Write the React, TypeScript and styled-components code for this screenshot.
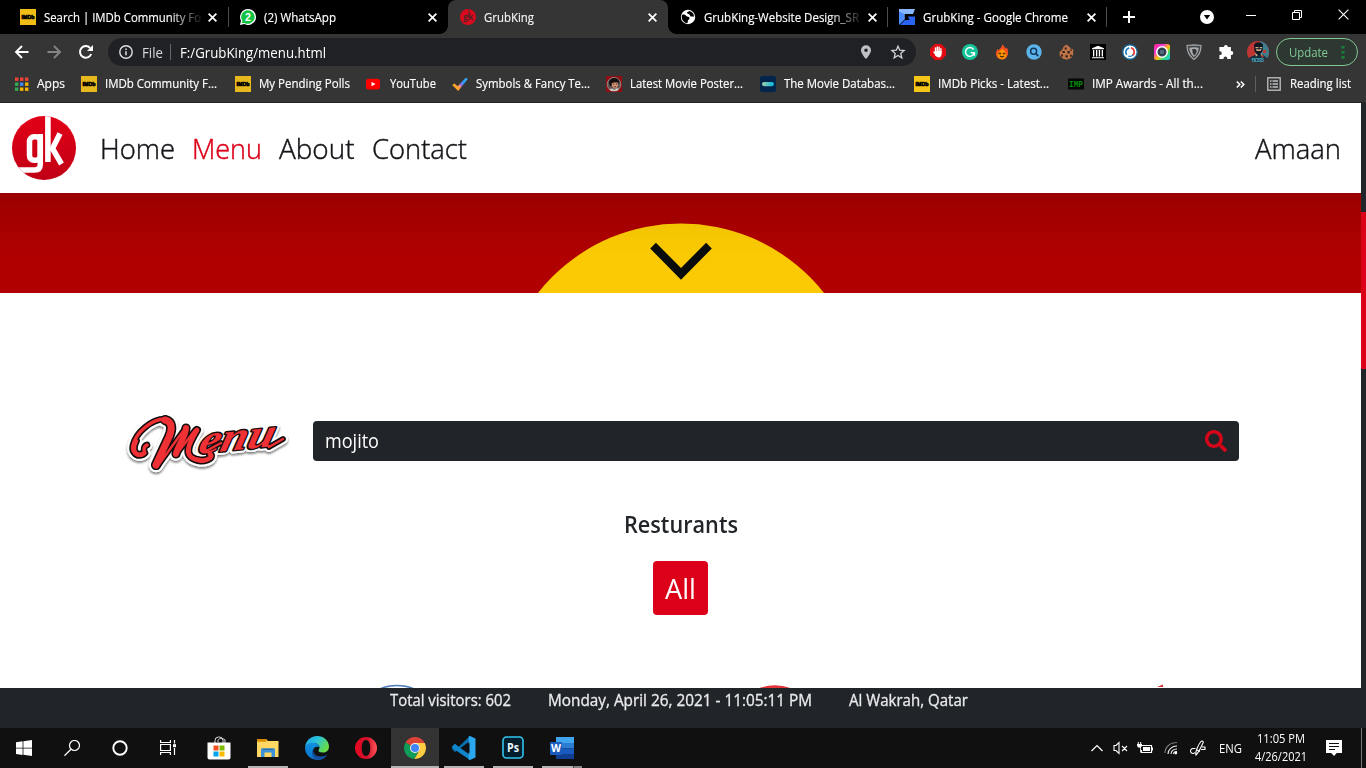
import React, { useLayoutEffect, useRef, useState } from "react";
import styled, { createGlobalStyle, css } from "styled-components";
import { FaSearch } from "react-icons/fa";

const SANS = `"Open Sans", "Noto Sans", sans-serif`;
const RED = "#dc0019";
const DARK = "#212529";

const GlobalStyle = createGlobalStyle`
  * { box-sizing: border-box; }
  body { margin: 0; overflow: hidden; background: #fff; font-family: ${SANS}; }
  svg { display: block; flex: none; }
`;

/* ---------- text that keeps a fixed advance width ---------- */

const FitBox = styled.span<{ $w: number }>`
  display: block;
  flex: none;
  width: ${(p) => p.$w}px;
  white-space: nowrap;
`;
const FitInner = styled.span`
  display: inline-block;
  transform-origin: left center;
`;

function Fit({ w, children }: { w: number; children: React.ReactNode }) {
  const ref = useRef<HTMLSpanElement>(null);
  const [scale, setScale] = useState(1);
  useLayoutEffect(() => {
    const el = ref.current;
    if (!el) return;
    el.style.transform = "none";
    const natural = el.getBoundingClientRect().width;
    el.style.transform = `scaleX(${w / natural})`;
    setScale(w / natural);
  }, [w]);
  return (
    <FitBox $w={w}>
      <FitInner ref={ref} style={{ transform: `scaleX(${scale})` }}>{children}</FitInner>
    </FitBox>
  );
}

/* ---------- layout ---------- */

const Screen = styled.div`
  width: 1366px;
  height: 768px;
  display: flex;
  flex-direction: column;
  overflow: hidden;
`;
const TabStrip = styled.div`
  height: 34px;
  flex: none;
  display: flex;
  background: #000;
  padding-left: 8px;
`;
const Tab = styled.div<{ $w?: number; $active?: boolean; $divider?: boolean }>`
  position: relative;
  width: ${(p) => p.$w ?? 220}px;
  flex: none;
  height: 34px;
  display: flex;
  align-items: center;
  padding-left: 12px;
  gap: 8px;
  color: #fff;
  font-size: 12.1px;
  line-height: 35px;
  -webkit-text-stroke: 0.15px currentColor;
  ${(p) => p.$active && css`
    background: #353535;
    border-radius: 8px 8px 0 0;
    color: #f1f3f4;
    &::before, &::after {
      content: "";
      position: absolute;
      bottom: 0;
      width: 8px;
      height: 8px;
    }
    &::before { left: -8px; background: radial-gradient(circle at 0 0, #000 7.5px, #353535 8px); }
    &::after { right: -8px; background: radial-gradient(circle at 100% 0, #000 7.5px, #353535 8px); }
  `}
  ${(p) => p.$divider && css`
    &::after {
      content: "";
      position: absolute;
      right: -1px;
      top: 7px;
      width: 1px;
      height: 20px;
      background: #4c4c4c;
    }
  `}
`;
const TabTitle = styled.div<{ $fade?: boolean }>`
  width: 157px;
  flex: none;
  ${(p) => p.$fade && css`mask-image: linear-gradient(90deg, #000 125px, transparent 160px);`}
`;
const TabClose = styled.span`
  display: block;
  margin-left: -1px;
`;
const WindowTools = styled.div`
  flex: 1;
  display: flex;
  gap: 34px;
  height: 34px;
`;
const ToolRow = styled.div`
  height: 36px;
  flex: none;
  display: flex;
  align-items: center;
  background: #353535;
`;
const Cell = styled.div<{ $w: number; $h?: number }>`
  width: ${(p) => p.$w}px;
  height: ${(p) => (p.$h ? p.$h + "px" : "auto")};
  flex: none;
  display: flex;
  align-items: center;
  justify-content: center;
`;
const UrlBar = styled.div`
  width: 808px;
  height: 28px;
  border-radius: 14px;
  background: #202124;
  display: flex;
  align-items: center;
  padding-left: 10px;
  font-size: 13.8px;
  line-height: 29px;
  color: #fff;
`;
const FileLabel = styled.div`
  margin-left: 8px;
  color: #d5d7da;
`;
const UrlDivider = styled.div`
  width: 1px;
  height: 16px;
  background: #66686b;
  margin: 0 9px 0 7px;
`;
const UrlIcons = styled.div`
  margin-left: auto;
  display: flex;
  padding-right: 2px;
`;
const UpdatePill = styled.div`
  width: 82px;
  height: 28px;
  border: 1px solid #81c995;
  border-radius: 14px;
  margin-left: 2px;
  background: #2e3832;
  display: flex;
  align-items: center;
  padding-left: 12px;
  color: #81c995;
  font-size: 12.8px;
  line-height: 26px;
  gap: 13px;
`;
const BookmarkRow = styled.div`
  height: 33px;
  flex: none;
  display: flex;
  align-items: center;
  background: #353535;
  border-bottom: 1px solid #242424;
  padding: 0 0 4px 13px;
  color: #fff;
  font-size: 12.1px;
  line-height: 28px;
  -webkit-text-stroke: 0.15px currentColor;
`;
const Bookmark = styled.div<{ $w: number }>`
  width: ${(p) => p.$w}px;
  flex: none;
  display: flex;
  align-items: center;
  gap: 8px;
`;
const ReadingList = styled.div`
  display: flex;
  align-items: center;
  height: 16px;
  border-left: 1px solid #5f5f5f;
  margin-left: 9px;
  padding-left: 11px;
  gap: 9px;
`;
const Viewport = styled.div`
  height: 585px;
  flex: none;
  display: flex;
  background: #fff;
`;
const PageBody = styled.main`
  width: 1361px;
  overflow: hidden;
`;
const ScrollTrack = styled.div`
  width: 5px;
  background: ${DARK};
  padding-top: 109px;
`;
const ScrollThumb = styled.div`
  height: 157px;
  background: ${RED};
`;
const SiteHeader = styled.header`
  height: 90px;
  display: flex;
  align-items: center;
  padding: 0 20px 0 12px;
  color: #141619;
  font-size: 28px;
  line-height: 40px;
  font-weight: 300;
  -webkit-text-stroke: 0.45px currentColor;
`;
const Nav = styled.nav`
  display: flex;
  gap: 17px;
  margin: 0 auto 0 24px;
`;
const NavLink = styled.a<{ $active?: boolean }>`
  color: ${(p) => (p.$active ? RED : "#141619")};
`;
const UserName = styled.div``;
const Banner = styled.section`
  height: 100px;
  display: flex;
  justify-content: center;
  background: linear-gradient(#9b0000, #a90000 40%, #b00000 65%, #b10000);
`;
const SearchRow = styled.section`
  margin-top: 118px;
  display: flex;
  align-items: flex-start;
  padding-left: 120px;
`;
const SearchBox = styled.div`
  margin: 10px 0 0 21px;
  width: 926px;
  height: 40px;
  border-radius: 4px;
  background: ${DARK};
  color: #fff;
  display: flex;
  align-items: center;
  justify-content: space-between;
  padding: 0 12px;
  font-size: 19.2px;
  line-height: 40px;
`;
const Restaurants = styled.section`
  display: flex;
  flex-direction: column;
  align-items: center;
  margin-top: 27px;
`;
const Heading = styled.h2`
  margin: 0;
  font-size: 22.8px;
  line-height: 33px;
  font-weight: 600;
  color: ${DARK};
`;
const AllButton = styled.button`
  width: 55px;
  height: 54px;
  margin: 20px 0 0;
  padding: 0 0 0 12px;
  border: 0;
  border-radius: 4px;
  background: ${RED};
  color: #fff;
  font: 400 27px/55px ${SANS};
  text-align: left;
`;
const LogoPeeks = styled.div`
  height: 5px;
  margin-top: 68px;
  display: flex;
`;
const Footer = styled.footer`
  height: 40px;
  flex: none;
  background: ${DARK};
  color: #e9eaeb;
  display: flex;
  gap: 37px;
  padding: 0 0 0 390px;
  font-size: 15.4px;
  line-height: 26px;
  -webkit-text-stroke: 0.3px currentColor;
`;
const Taskbar = styled.div`
  height: 40px;
  flex: none;
  background: #101010;
  display: flex;
  color: #fff;
`;
const SystemButtons = styled.div`
  display: flex;
  margin-right: 2px;
`;
const AppButton = styled.div<{ $open?: boolean; $active?: boolean; $more?: boolean }>`
  position: relative;
  width: 49px;
  height: 40px;
  display: flex;
  align-items: center;
  justify-content: center;
  ${(p) => p.$active && css`background: linear-gradient(90deg, #101010 1px, #333 1px);`}
  ${(p) => (p.$open || p.$active) && css`
    &::after {
      content: "";
      position: absolute;
      bottom: 0;
      left: ${p.$active ? 1 : 5}px;
      right: ${p.$active ? 0 : 4}px;
      height: 2px;
      background: ${p.$more ? "linear-gradient(90deg,#b4b4b4 31px,#4a4a4a 31px 32px,#858585 32px)" : "#b4b4b4"};
    }
  `}
`;
const Tray = styled.div`
  margin-left: auto;
  display: flex;
  align-items: center;
  font-size: 11.8px;
  line-height: 18px;
`;
const Clock = styled.div`
  margin-left: 13px;
  width: 52px;
  display: flex;
  flex-direction: column;
  align-items: center;
  padding-bottom: 2px;
`;
const DesktopEdge = styled.div`
  width: 5px;
  height: 40px;
  border-left: 1px solid #777;
`;

/* ---------- icons ---------- */

const Svg = ({ s = 16, h, vb, children }: { s?: number; h?: number; vb?: string; children: React.ReactNode }) => (
  <svg width={s} height={h ?? s} viewBox={vb ?? `0 0 ${s} ${h ?? s}`} fill="none">{children}</svg>
);

const Imdb = ({ c = "#e6b91e" }: { c?: string }) => (
  <Svg>
    <rect width="16" height="16" fill={c} />
    <text x="1.6" y="10.2" fontFamily="Liberation Sans" fontWeight="700" fontSize="6" textLength="13" lengthAdjust="spacingAndGlyphs" fill="#000" stroke="#000" strokeWidth=".7">IMDb</text>
  </Svg>
);
const WhatsApp = () => (
  <Svg>
    <path d="M8 0a8 8 0 1 1-3.7 15.1L0 16l1-4.2A8 8 0 0 1 8 0Z" fill="#fff" />
    <path d="M8 1.2A6.8 6.8 0 1 1 4.5 13.900L1.8 14.300l.6-2.500A6.8 6.8 0 0 1 8 1.200Z" fill="#12c343" />
    <text x="5" y="11.700" fontFamily="Liberation Sans" fontWeight="700" fontSize="10.500" fill="#fff">2</text>
  </Svg>
);
const GkFavicon = () => (
  <Svg>
    <circle cx="8" cy="8" r="8" fill="#d80a1e" />
    <path d="M8.400 0h1v9h-1z" fill="#5c2328" />
    <text x="3.200" y="11" fontFamily="Open Sans" fontWeight="700" fontSize="9.500" textLength="10" lengthAdjust="spacingAndGlyphs" fill="#4d2226">gk</text>
  </Svg>
);
const Globe = () => (
  <Svg>
    <circle cx="8" cy="8" r="7.200" fill="#fff" />
    <path d="M2.500 5.500c1.800 0 3 .4 3.800 1.600 1 .9 2.500.6 3.200 1.700.5 1.200-.9 1.700-1.500 2.700-.4.900.1 1.800-.8 2.700C4 13.600 1.700 11 1.700 8c0-1 .3-1.900.8-2.500ZM9.300 1.900c-.6 1-2.300.7-2.300 1.900 0 1.100 1.700.9 2.500 1.700.7.800.4 1.800 1.400 2 .9.300 2-.4 3.200.2C14 4.700 12 2.300 9.300 1.900Z" fill="#000" />
  </Svg>
);
const Gmetrix = () => (
  <Svg>
    <path d="M0 0h16l-2 5H5.500v5L0 15Z" fill="#8ab8ff" />
    <path d="M0 3v13l5.500-5.500V5L1 3Z" fill="#4b8cff" />
    <path d="M9 7.500h7V16H1l5-5h4.500Z" fill="#2a62f2" />
  </Svg>
);
const X = ({ s = 8, w = 1.6 }: { s?: number; w?: number }) => (
  <Svg s={s}><path d={`M.6.6 ${s - 0.6} ${s - 0.6}M${s - 0.6}.6.6 ${s - 0.6}`} stroke="#fff" strokeWidth={w} /></Svg>
);
const Arrow = ({ c, flip }: { c: string; flip?: boolean }) => (
  <Svg><path d={flip ? "M1.500 8h12M8 2l6 6-6 6" : "M14.500 8h-12M8 2 2 8l6 6"} stroke={c} strokeWidth="1.900" /></Svg>
);
const Reload = () => (
  <Svg><path d="M13.200 10a5.800 5.800 0 1 1-1-5.900" stroke="#fff" strokeWidth="2" /><path d="M15 1v6H9Z" fill="#fff" /></Svg>
);
const Info = () => (
  <Svg><circle cx="8" cy="8" r="6.200" stroke="#dfe1e5" strokeWidth="1.400" /><path d="M8 7.200v4M8 4.600v1.500" stroke="#dfe1e5" strokeWidth="1.500" /></Svg>
);
const Pin = () => (
  <Svg><path fillRule="evenodd" d="M8 1.200a5 5 0 0 0-5 5c0 3.500 5 8.800 5 8.800s5-5.300 5-8.800a5 5 0 0 0-5-5Zm0 3.200a1.800 1.800 0 1 1 0 3.600 1.800 1.800 0 0 1 0-3.600Z" fill="#bdc1c6" /></Svg>
);
const Star = () => (
  <Svg><path d="m8 2.200 1.700 4 4.400.4-3.300 2.900 1 4.300L8 11.500l-3.800 2.300 1-4.300-3.300-2.900 4.400-.4Z" stroke="#d0d2d6" strokeWidth="1.300" /></Svg>
);

const AdBlock = () => (
  <Svg>
    <path d="M4.700 0h6.600L16 4.700v6.600L11.300 16H4.700L0 11.300V4.700Z" fill="#e30b12" />
    <path d="M5.500 9V4M7.300 8V2.900M9.100 8V3.300M10.900 9.500V4.800M3.900 8l2.300 3" stroke="#fff" strokeWidth="1.400" strokeLinecap="round" />
    <path d="M4.900 7h6.600v3.200c0 2-1 3.200-2.900 3.200-1.900 0-3.700-1.500-3.700-3.600Z" fill="#fff" />
  </Svg>
);
const Grammarly = () => (
  <Svg>
    <circle cx="8" cy="8" r="8" fill="#15c39a" />
    <path d="M11.600 5.500A4.400 4.400 0 1 0 12.200 9M8.800 8.800h3.600v3" stroke="#fff" strokeWidth="1.400" />
  </Svg>
);
const Flame = () => (
  <Svg>
    <path d="M8.300.5c2 1.500 2.200 3 3.600 4.300l1-1.200c1 2.200 1.600 4 1.100 6.400-.5 2.900-2.700 5.500-6 5.500s-5.700-2.300-6-5.200C1.700 8.200 2.500 6.500 3.600 5l1 1.200C5.800 4.500 8.200 3 8.300.5Z" fill="#f4511e" />
    <path d="M8 5c2 1.500 4.500 2.500 4.500 6 0 2.500-2 4.200-4.500 4.200S3.500 13.500 3.500 11C3.500 8 6.500 7 8 5Z" fill="#ff9800" />
    <path d="M4.500 9.500h2.700M8.800 9.500h2.700M6 12.200c1.300.8 2.700.8 4 0" stroke="#5a2b12" strokeWidth="1.400" />
  </Svg>
);
const BlueLens = () => (
  <Svg>
    <circle cx="8" cy="8" r="7.700" fill="#5bb5ea" />
    <circle cx="7.600" cy="7.300" r="3" stroke="#16365c" strokeWidth="1.500" />
    <path d="m9.800 9.600 2.500 2.600" stroke="#16365c" strokeWidth="1.700" />
  </Svg>
);
const Cookie = () => (
  <Svg>
    <path d="M9.500.6c.1 1.700 1 2.400 2.400 2.500.2 1.700 1.300 2.200 3.300 2.200v4.900l-2 3.800-4.500 1.700-4-1.200-3-3.100L1.500 8 4 6l2-4Z" fill="#bd7448" />
    <path d="M6.700 3.500h2v2h-2zM9.500 7h2.300v2.400H9.500zM4.500 7h2.300v2H4.500zM3 10.500h2v2H3zM7.500 11.200h2.300v2.400H7.500zM12 10.800h1.800v2H12zM12.200 5.600h1.700v1.200h-1.700z" fill="#3d2018" />
  </Svg>
);
const Archive = () => (
  <Svg>
    <rect width="16" height="16" fill="#000" />
    <path d="m2 4.200 6-2.500 6 2.500v1H2ZM3 6h1.300v6.500H3zM6 6h1.300v6.500H6zM8.800 6h1.300v6.500H8.800zM11.700 6H13v6.500h-1.300zM2 13.200h12v1H2z" fill="#fff" />
  </Svg>
);
const Swirl = () => (
  <Svg>
    <circle cx="8" cy="8" r="7.300" fill="#fff" stroke="#17628f" strokeWidth="1.400" />
    <path d="M7.200 3.800a4.300 4.300 0 0 0-2.400 7" stroke="#1d81bd" strokeWidth="1.700" />
    <path d="M6.300 12.100a4.300 4.300 0 0 0 5.800-3.600" stroke="#1d81bd" strokeWidth="1.300" />
    <path d="M9 3.800a4.300 4.300 0 0 1 1.800 7.400" stroke="#e53935" strokeWidth="1.700" />
  </Svg>
);
const Camera = () => (
  <Svg>
    <defs><linearGradient id="cam" x1="0" y1="0" x2="1" y2="1"><stop stopColor="#ff2f80" /><stop offset=".3" stopColor="#f533d7" /><stop offset=".55" stopColor="#ffc400" /><stop offset=".75" stopColor="#2bdb77" /><stop offset="1" stopColor="#1dc8ff" /></linearGradient></defs>
    <rect width="16" height="16" rx="2.500" fill="url(#cam)" />
    <circle cx="8" cy="8" r="5.300" fill="#3b4a5c" stroke="#fff" strokeWidth="1.500" />
    <circle cx="8" cy="8" r="3" fill="#53687d" stroke="#202c3b" />
  </Svg>
);
const Shield = () => (
  <Svg>
    <path d="M8 .8 15 1.500c0 6-1.800 10.500-7 14C2.800 12 1 7.500 1 1.500Z" fill="#44474a" stroke="#a6a8aa" strokeWidth="1.200" />
    <path d="M8 3.300c1.800 0 3.200.2 4.700.5-.2 3.800-1.500 6.700-4.700 9.200-3.200-2.500-4.500-5.400-4.700-9.200C4.800 3.500 6.200 3.300 8 3.300Z" fill="#a9abad" />
    <path d="M6.300 5H8c2.300 0 3 1 2.500 2.900C10.100 9.400 9.200 10.500 8 11.300 6.800 9.800 6.300 8 6.300 5Z" fill="#333" />
  </Svg>
);
const Puzzle = () => (
  <Svg><path d="M6 3a1.900 1.900 0 0 1 3.800 0h3.100v3.900h.4a2 2 0 0 1 0 4h-.4V15H9.300v-.6a1.900 1.900 0 0 0-3.800 0v.6H1.400v-3.900h.5a1.900 1.900 0 0 0 0-3.800h-.5V3Z" fill="#fff" /></Svg>
);
const Avatar = () => (
  <Svg s={22}>
    <defs><clipPath id="av"><circle cx="11" cy="11" r="11" /></clipPath></defs>
    <g clipPath="url(#av)">
      <path fill="#bf3634" d="M0 0h22v22H0z" />
      <path fill="#3f7f8d" d="M13 0h9v17h-9z" />
      <path fill="#17303e" d="m2 17 5-3 8-1 5 4v5H2Z" />
      <path fill="#0d1820" d="M7 4c2-4 8-3 9 0l-.5 6-3 4H10L7.500 10Z" />
      <path fill="#cfa78e" d="M8.500 6h3v1.200h-3zM12.700 6h2.400v1.200h-2.400zM9 8l2.500.4 3-.4-.8 2H9.500ZM8 12l3 2-2 1.500ZM14 12l2 3h-2z" />
      <path fill="#c33b35" d="M16 9h3v3h-3zM14 14l3 1-2 2zM5 14l2-2v3z" />
      <text x="4.400" y="21.300" fontFamily="Liberation Sans" fontWeight="700" fontSize="5.500" fill="#4faabd" textLength="13">BOSS</text>
    </g>
  </Svg>
);
const AppsGrid = () => (
  <Svg>
    {["#ef4437", "#ef4437", "#ef4437", "#34a853", "#4285f4", "#f4b400", "#34a853", "#f4b400", "#f4b400"].map((c, i) => (
      <rect key={i} x={2 + (i % 3) * 5} y={1.500 + Math.floor(i / 3) * 5} width="3.400" height="3.400" fill={c} />
    ))}
  </Svg>
);
const YouTube = () => (
  <Svg><rect x="0" y="2.700" width="14" height="10.800" rx="2.500" fill="#f00" /><path d="m5.500 6 4 2.100-4 2.200Z" fill="#fff" /></Svg>
);
const Check = () => (
  <Svg>
    <defs><linearGradient id="ck" x1="2" y1="13" x2="15" y2="3" gradientUnits="userSpaceOnUse"><stop stopColor="#ffb300" /><stop offset=".35" stopColor="#ff9656" /><stop offset=".5" stopColor="#9169f2" /><stop offset=".7" stopColor="#2c9cff" /><stop offset="1" stopColor="#35aef8" /></linearGradient></defs>
    <path d="m.2 8.900 2.200-1.300 3.200 2.700 8.300-8.600 1.900 1.200L6.200 15Z" fill="url(#ck)" />
  </Svg>
);
const Poster = () => (
  <Svg>
    <rect width="16" height="16" fill="#920e15" />
    <circle cx="8" cy="8.300" r="6.800" fill="#5e5451" stroke="#999591" strokeWidth=".8" />
    <path d="M3 7c0-5 8-7 10-2l.5 3-2-2-5 1-1 3H4Z" fill="#160f10" />
    <path d="m5.500 7.500 2-1 4 .3.500 2.700-2 3H8L6 10Z" fill="#d89575" />
    <path d="M6.800 8h1.500M9.800 8h1.500M8 10.800h2" stroke="#321719" strokeWidth=".8" />
    <path d="m3 13 4-.500 1 1.500 3-2 2 1-2 2H5Z" fill="#c8c8c2" />
  </Svg>
);
const Tmdb = () => (
  <Svg>
    <defs><linearGradient id="tm"><stop stopColor="#a1cfaa" /><stop offset="1" stopColor="#02b8dc" /></linearGradient></defs>
    <rect width="16" height="16" rx="2.500" fill="#03254b" />
    <rect x="2" y="6" width="12" height="4.200" rx="2.100" fill="url(#tm)" />
  </Svg>
);
const Imp = () => (
  <Svg>
    <rect y="2.500" width="16" height="11" rx="1" fill="#030803" />
    <text x="1" y="11.300" fontFamily="Liberation Mono" fontWeight="700" fontSize="8.500" textLength="14" lengthAdjust="spacingAndGlyphs" fill="#078a0d">IMP</text>
  </Svg>
);
const ListIcon = () => (
  <Svg s={14}>
    <rect x=".8" y=".8" width="12.400" height="12.400" stroke="#bfc1c4" strokeWidth="1.300" />
    <path d="M3 4h1.500M3 7h1.500M3 10h1.500M5.500 4H11M5.500 7H11M5.500 10H11" stroke="#bfc1c4" strokeWidth="1.300" />
  </Svg>
);

const GkLogo = () => (
  <Svg s={64}>
    <defs>
      <linearGradient id="gk" x1="0" y1="0" x2="0" y2="1"><stop stopColor="#e20017" /><stop offset="1" stopColor="#c00015" /></linearGradient>
      <clipPath id="disc"><circle cx="32" cy="32" r="32" /></clipPath>
    </defs>
    <circle cx="32" cy="32" r="32" fill="url(#gk)" />
    <g clipPath="url(#disc)" stroke="#fff">
      <path d="M35.900 0v46" strokeWidth="5.600" />
      <path d="M48 17.500 40.500 32.500 49.500 48" strokeWidth="5.500" strokeLinejoin="bevel" />
      <path d="M28.300 18v30q0 6-5.500 6H3" strokeWidth="5.500" />
      <rect x="17.500" y="20.800" width="10.800" height="23.500" rx="4.500" strokeWidth="5.500" />
    </g>
  </Svg>
);

const MenuLogo = () => (
  <svg width="172" height="70" viewBox="0 0 172 70" fill="none">
    <defs><filter id="ms" x="-10%" y="-10%" width="120%" height="130%"><feDropShadow dx="0" dy="2" stdDeviation="1.100" floodColor="#000" floodOpacity=".5" /></filter></defs>
    {[["#fff", 7.500], ["#140c0d", 3.200], ["#ef3034", 0]].map(([c, o], i) => {
      const g = o as number;
      return (
        <g key={i} filter={i === 0 ? "url(#ms)" : undefined} stroke={c as string} strokeLinejoin="round" strokeLinecap="round">
          <path d="M27 34c-3 1-4 5-2 8-7 5-14 0-12-8C16 22 31 8 45 8" strokeWidth={g + 3.500} />
          <path d="M23 43c-9 3-11-5-7-13" strokeWidth={g + 4.500} />
          <path d="M45 9c8 2 7 10 4 17L36 54" strokeWidth={g + 7} />
          <path d="M37 56 66 16" strokeWidth={g + 2.500} />
          <path d="M66 17C66 26 58 33 56 43" strokeWidth={g + 6} />
          <path d="M56 44 75 19" strokeWidth={g + 2.500} />
          <path d="M77 19C72 28 64 40 71 46c5 4 14 5 19 1q2-2 0-4" strokeWidth={g + 4.800} />
          <text
            transform="translate(77 43) rotate(-6) skewX(-20)"
            fontFamily="Liberation Serif" fontStyle="italic" fontWeight="700" fontSize="40"
            textLength="76" lengthAdjust="spacingAndGlyphs"
            fill={c as string} strokeWidth={g * 0.85}
          >enu</text>
          <path d="M88 39 101 32M149 36 163 28" strokeWidth={g + 2.500} />
        </g>
      );
    })}
  </svg>
);

const bookmarks: { icon: React.ReactNode; label: string; w: number; tw: number }[] = [
  { icon: <AppsGrid />, label: "Apps", w: 68, tw: 28 },
  { icon: <Imdb />, label: "IMDb Community F...", w: 154, tw: 112 },
  { icon: <Imdb />, label: "My Pending Polls", w: 131, tw: 91 },
  { icon: <YouTube />, label: "YouTube", w: 86, tw: 46 },
  { icon: <Check />, label: "Symbols & Fancy Te...", w: 154, tw: 114 },
  { icon: <Poster />, label: "Latest Movie Poster...", w: 154, tw: 113 },
  { icon: <Tmdb />, label: "The Movie Databas...", w: 154, tw: 111 },
  { icon: <Imdb c="#f5c518" />, label: "IMDb Picks - Latest...", w: 154, tw: 111 },
  { icon: <Imp />, label: "IMP Awards - All th...", w: 167, tw: 111 },
];

const tabs = [
  { icon: <Imdb c="#f0bd17" />, title: "Search | IMDb Community Fo", tw: 157, fade: true, divider: true },
  { icon: <WhatsApp />, title: "(2) WhatsApp", tw: 72 },
  { icon: <GkFavicon />, title: "GrubKing", tw: 50, active: true },
  { icon: <Globe />, title: "GrubKing-Website Design_SR", tw: 155, fade: true, divider: true, w: 219 },
  { icon: <Gmetrix />, title: "GrubKing - Google Chrome", tw: 145, divider: true, w: 219 },
];

export default function App() {
  return (
    <Screen>
      <GlobalStyle />
      <TabStrip>
        {tabs.map((t) => (
          <Tab key={t.title} $w={t.w} $active={t.active} $divider={t.divider}>
            {t.icon}
            <TabTitle $fade={t.fade}><Fit w={t.tw}>{t.title}</Fit></TabTitle>
            <TabClose><X s={9} w={1.7} /></TabClose>
          </Tab>
        ))}
        <WindowTools>
          <Cell $w={46} $h={34}><Svg s={12}><path d="M6 0v12M0 6h12" stroke="#fff" strokeWidth="2" /></Svg></Cell>
          <Cell $w={42} $h={34}><Svg s={14}><circle cx="7" cy="7" r="7" fill="#fff" /><path d="M3.800 5h6.400L7 9.500Z" fill="#000" /></Svg></Cell>
        </WindowTools>
        <Cell $w={46} $h={29}><Svg s={10}><path d="M0 5.500h10" stroke="#fff" /></Svg></Cell>
        <Cell $w={46} $h={29}><Svg s={10}><path d="M.5 2.500h7v7h-7ZM2.500 2.500v-2h7v7h-2" stroke="#fff" /></Svg></Cell>
        <Cell $w={46} $h={29}><X s={11} w={1.1} /></Cell>
      </TabStrip>
      <ToolRow>
        <Cell $w={44}><Arrow c="#fff" /></Cell>
        <Cell $w={20}><Arrow c="#858585" flip /></Cell>
        <Cell $w={44}><Reload /></Cell>
        <UrlBar>
          <Info />
          <FileLabel><Fit w={21}>File</Fit></FileLabel>
          <UrlDivider />
          <Fit w={146}>F:/GrubKing/menu.html</Fit>
          <UrlIcons>
            <Cell $w={32}><Pin /></Cell>
            <Cell $w={32}><Star /></Cell>
          </UrlIcons>
        </UrlBar>
        <Cell $w={6} />
        {[AdBlock, Grammarly, Flame, BlueLens, Cookie, Archive, Swirl, Camera, Shield, Puzzle].map((I, i) => (
          <Cell key={i} $w={32}><I /></Cell>
        ))}
        <Cell $w={32}><Avatar /></Cell>
        <UpdatePill>
          <Fit w={39}>Update</Fit>
          <Svg s={4} h={14}><path d="M.5 1h3v2.500h-3zM.5 6h3v2.500h-3zM.5 11h3v2.500h-3z" fill="#188038" /></Svg>
        </UpdatePill>
      </ToolRow>
      <BookmarkRow>
        {bookmarks.map((b) => (
          <Bookmark key={b.label} $w={b.w}>{b.icon}<Fit w={b.tw}>{b.label}</Fit></Bookmark>
        ))}
        <Cell $w={11}>
          <Svg s={9}><path d="m.8 1.500 3 3-3 3M4.800 1.500l3 3-3 3" stroke="#fff" strokeWidth="1.500" /></Svg>
        </Cell>
        <ReadingList><ListIcon /><Fit w={61}>Reading list</Fit></ReadingList>
      </BookmarkRow>

      <Viewport>
        <PageBody>
          <SiteHeader>
            <GkLogo />
            <Nav>
              <NavLink><Fit w={75}>Home</Fit></NavLink>
              <NavLink $active><Fit w={70}>Menu</Fit></NavLink>
              <NavLink><Fit w={75.5}>About</Fit></NavLink>
              <NavLink><Fit w={95}>Contact</Fit></NavLink>
            </Nav>
            <UserName><Fit w={86}>Amaan</Fit></UserName>
          </SiteHeader>
          <Banner>
            <svg width="366" height="100" viewBox="0 0 366 100">
              <defs>
                <linearGradient id="sun" x1="0" y1="30" x2="0" y2="64" gradientUnits="userSpaceOnUse"><stop stopColor="#f2c400" /><stop offset="1" stopColor="#fbca05" /></linearGradient>
              </defs>
              <circle cx="183" cy="212.500" r="182" fill="url(#sun)" />
              <path d="m152.200 55.500 5.700-5.700L183 75l25.100-25.200 5.700 5.700L183 86.700Z" fill="#0a0b0b" />
            </svg>
          </Banner>
          <SearchRow>
            <MenuLogo />
            <SearchBox>
              <Fit w={54}>mojito</Fit>
              <FaSearch size={22} color="#d60619" />
            </SearchBox>
          </SearchRow>
          <Restaurants>
            <Heading><Fit w={114}>Resturants</Fit></Heading>
            <AllButton><Fit w={31}>All</Fit></AllButton>
          </Restaurants>
          <LogoPeeks>
            <svg width="1361" height="5" viewBox="0 0 1361 5" fill="none">
              <circle cx="397" cy="45.500" r="43" stroke="#4d7db5" strokeWidth="1.500" />
              <circle cx="775" cy="48" r="45.700" fill="#e5333a" />
              <path d="M1157 4q3-1.500 6-2.500V4Z" fill="#d92b32" />
            </svg>
          </LogoPeeks>
        </PageBody>
        <ScrollTrack><ScrollThumb /></ScrollTrack>
      </Viewport>

      <Footer>
        <Fit w={121}>Total visitors: 602</Fit>
        <Fit w={264}>Monday, April 26, 2021 - 11:05:11 PM</Fit>
        <Fit w={119}>Al Wakrah, Qatar</Fit>
      </Footer>

      <Taskbar>
        <SystemButtons>
          <Cell $w={48}><Svg><path d="m0 2.200 6.600-.9v6.400H0ZM7.400 1.200 16 0v7.700H7.400ZM0 8.500h6.600V15L0 14ZM7.400 8.500H16V16l-8.600-1.200Z" fill="#fff" /></Svg></Cell>
          <Cell $w={48}><Svg><circle cx="10.500" cy="5.500" r="5" stroke="#fff" strokeWidth="1.200" /><path d="M7 9.200.4 15.700" stroke="#fff" strokeWidth="1.300" /></Svg></Cell>
          <Cell $w={48}><Svg><circle cx="8" cy="8" r="6.700" stroke="#fff" strokeWidth="1.900" /></Svg></Cell>
          <Cell $w={48}><Svg><path d="M.6 0v2.500h9.800V0M.6 15v-2.500h9.800V15M.6 4.500h9.800v6H.6ZM14.500 0v3.500M14.500 8v7" stroke="#fff" strokeWidth="1.200" /><path d="M13 4.200h3v3h-3z" fill="#fff" /></Svg></Cell>
        </SystemButtons>
        <AppButton>
          <Svg s={24}>
            <path d="M8 8V4.500a3.500 3.500 0 0 1 3.500-3.500h1A3.500 3.500 0 0 1 16 4.500V8M11 6V4.500c0-2 4-3 7-.5V7" stroke="#ddd" strokeWidth="1" />
            <path d="M.5 6.500h23v15q0 2-2 2h-19q-2 0-2-2Z" fill="#fff" />
            <path d="M6.500 9.500h5v5h-5z" fill="#f25022" /><path d="M12.500 9.500h5v5h-5z" fill="#7fba00" /><path d="M6.500 15.500h5v5h-5z" fill="#00a4ef" /><path d="M12.500 15.500h5v5h-5z" fill="#ffb900" />
          </Svg>
        </AppButton>
        <AppButton $open>
          <Svg s={24}>
            <path d="M1 3h9l2 2h10.500v16H1Z" fill="#ffd762" /><path d="M1 3h9l1 1-1 1.700H1Z" fill="#d98e02" />
            <path d="M5 12.500h14V21h-3.500v-4.500h-7V21H5Z" fill="#3d92d8" /><path d="M6.500 12.500h11V14h-11z" fill="#2471b4" />
          </Svg>
        </AppButton>
        <AppButton>
          <Svg s={24}>
            <defs>
              <linearGradient id="e1" x1="0" y1="0" x2="1" y2=".5"><stop stopColor="#1aa4e8" /><stop offset=".5" stopColor="#2bc2dc" /><stop offset="1" stopColor="#67dd47" /></linearGradient>
              <linearGradient id="e2" x1="0" y1="0" x2="0" y2="1"><stop stopColor="#1391df" /><stop offset="1" stopColor="#0872cc" /></linearGradient>
            </defs>
            <path d="M0 11.500C.5 5 5.500 0 12 0c7 0 12 5 12 10.500 0 4-3 6-6 6-3.500 0-4.500-1-4.500-2 0-.8 1-1.300 1-3C14.500 9 12 7 8.500 7 4.500 7 1.500 9 0 11.500Z" fill="url(#e1)" />
            <path d="M0 12c1-3.500 4.500-5.300 8-5.300 4 0 6.300 2.300 6.400 4.300C10.500 9.800 8 12 8 15c0 4 4 7 8.500 8A12 12 0 0 1 0 12Z" fill="url(#e2)" />
            <path d="M8.500 12.500c-1.500 4.500 2.500 8 7 8 3 0 5-1 7-2.300C20.700 21.200 18 24 13.500 24 8 23.500 5 17.500 8.500 12.500Z" fill="#12509f" />
          </Svg>
        </AppButton>
        <AppButton>
          <Svg s={22}>
            <defs><linearGradient id="op"><stop stopColor="#e80721" /><stop offset=".55" stopColor="#d0122b" /><stop offset="1" stopColor="#ff5557" /></linearGradient></defs>
            <path fillRule="evenodd" d="M11 0a11 11 0 1 0 0 22 11 11 0 0 0 0-22Zm0 3c2.700 0 4.300 3.500 4.300 8s-1.600 8-4.300 8-4.300-3.500-4.300-8 1.600-8 4.300-8Z" fill="url(#op)" />
          </Svg>
        </AppButton>
        <AppButton $active>
          <Svg s={22}>
            <path d="M11 11 1.500 5.500A11 11 0 0 1 20.500 5.500Z" fill="#db4437" />
            <path d="M11 11 1.500 5.500A11 11 0 0 0 10.500 22L15 13Z" fill="#0f9d58" />
            <path d="M11 6h9.800A11 11 0 0 1 10.500 22l5-9Z" fill="#ffcd40" />
            <circle cx="11" cy="11" r="5" fill="#f1f1f1" /><circle cx="11" cy="11" r="4" fill="#4285f4" />
          </Svg>
        </AppButton>
        <AppButton $open>
          <Svg s={24}>
            <path d="M18 0 4.500 13 1.800 11 .3 11.800v1.500L3 16 18 5Z" fill="#0878bd" opacity=".95" />
            <path d="M18 24 3 8 .5 10v1.500L18 19Z" fill="#1487cf" />
            <path d="M3 8 .3 10.200 .3 12 18 24v-5Z" fill="#0f85ca" />
            <path d="m18 0 5.500 2.500v19L18 24l-1.300-.5V.5Z" fill="#2aa7ee" />
            <path d="M17.500 7v10L11 12Z" fill="#101010" />
          </Svg>
        </AppButton>
        <AppButton $open>
          <Svg s={22} h={24}>
            <rect x="1" y="1" width="20" height="21" rx="3.500" fill="#021d2b" stroke="#31c5f0" strokeWidth="1.600" />
            <text x="5" y="15.500" fontFamily="Open Sans" fontWeight="700" fontSize="12" textLength="12" lengthAdjust="spacingAndGlyphs" fill="#e8f9ff">Ps</text>
          </Svg>
        </AppButton>
        <AppButton $open $more>
          <Svg s={24}>
            <path d="M6 1h18v6H6z" fill="#41a5ee" /><path d="M6 7h18v5.500H6z" fill="#2b7cd3" /><path d="M6 12.500h18V18H6z" fill="#185abd" /><path d="M6 18h18v5H6z" fill="#103f91" />
            <rect y="6" width="12" height="13" rx="1" fill="#1b5cbe" />
            <text x="1" y="16.200" fontFamily="Open Sans" fontWeight="700" fontSize="10.500" textLength="10" lengthAdjust="spacingAndGlyphs" fill="#fff">W</text>
          </Svg>
        </AppButton>
        <Tray>
          <Cell $w={24}><Svg s={12} h={8}><path d="M.5 7 6 1.500 11.500 7" stroke="#fff" strokeWidth="1.200" /></Svg></Cell>
          <Cell $w={22}><Svg s={15} h={14}><path d="M1 4.500h2L6 1.500v11l-3-3H1ZM9 5l5 5M14 5l-5 5" stroke="#fff" strokeWidth="1.100" /></Svg></Cell>
          <Cell $w={28}><Svg s={16} h={14}><path d="M5 4.500h9.500v7H4.500V9" stroke="#fff" strokeWidth="1.200" /><path d="M6 6h7v4H6z" fill="#fff" /><path d="M14.700 6.500H16v3h-1.300zM0 3h5v1.500L4 6.500v4H5v1H3.200v-5H1L0 4.500ZM.8 1h1v2h-1zM3.200 1h1v2h-1z" fill="#fff" /></Svg></Cell>
          <Cell $w={24}><Svg s={14} h={14}><path d="M1 12C1 6 6 1.500 13 1.500" stroke="#777" strokeWidth="1.200" /><path d="M4 13c0-4.500 4-8 9-8M7 13c0-2.800 2.500-5 6-5M9.500 13c0-1.500 1.500-2.500 3.500-2.500" stroke="#eee" strokeWidth="1.100" /><circle cx="11.800" cy="12" r="1.400" fill="#fff" /></Svg></Cell>
          <Cell $w={30}><Svg><path d="M5.500 8.500H3a2.500 2.500 0 1 0 2 4M6 15c-1-3 2-10 5-13.500 1-1 3 0 2 1.500-2 4-4 9-7 12ZM7 10l3 1.500M12 7h3v2.500h-4" stroke="#fff" strokeWidth="1.100" /></Svg></Cell>
          <Cell $w={6} />
          <Fit w={23}>ENG</Fit>
          <Clock><Fit w={48}>11:05 PM</Fit><Fit w={52}>4/26/2021</Fit></Clock>
          <Cell $w={54}><Svg s={16}><path d="M0 0h16v13h-5.200L8 16l-2.800-3H0Z" fill="#fff" /><path d="M3 3.500h10M3 6.500h10M3 9.500h6" stroke="#101010" strokeWidth="1.200" /></Svg></Cell>
          <DesktopEdge />
        </Tray>
      </Taskbar>
    </Screen>
  );
}
